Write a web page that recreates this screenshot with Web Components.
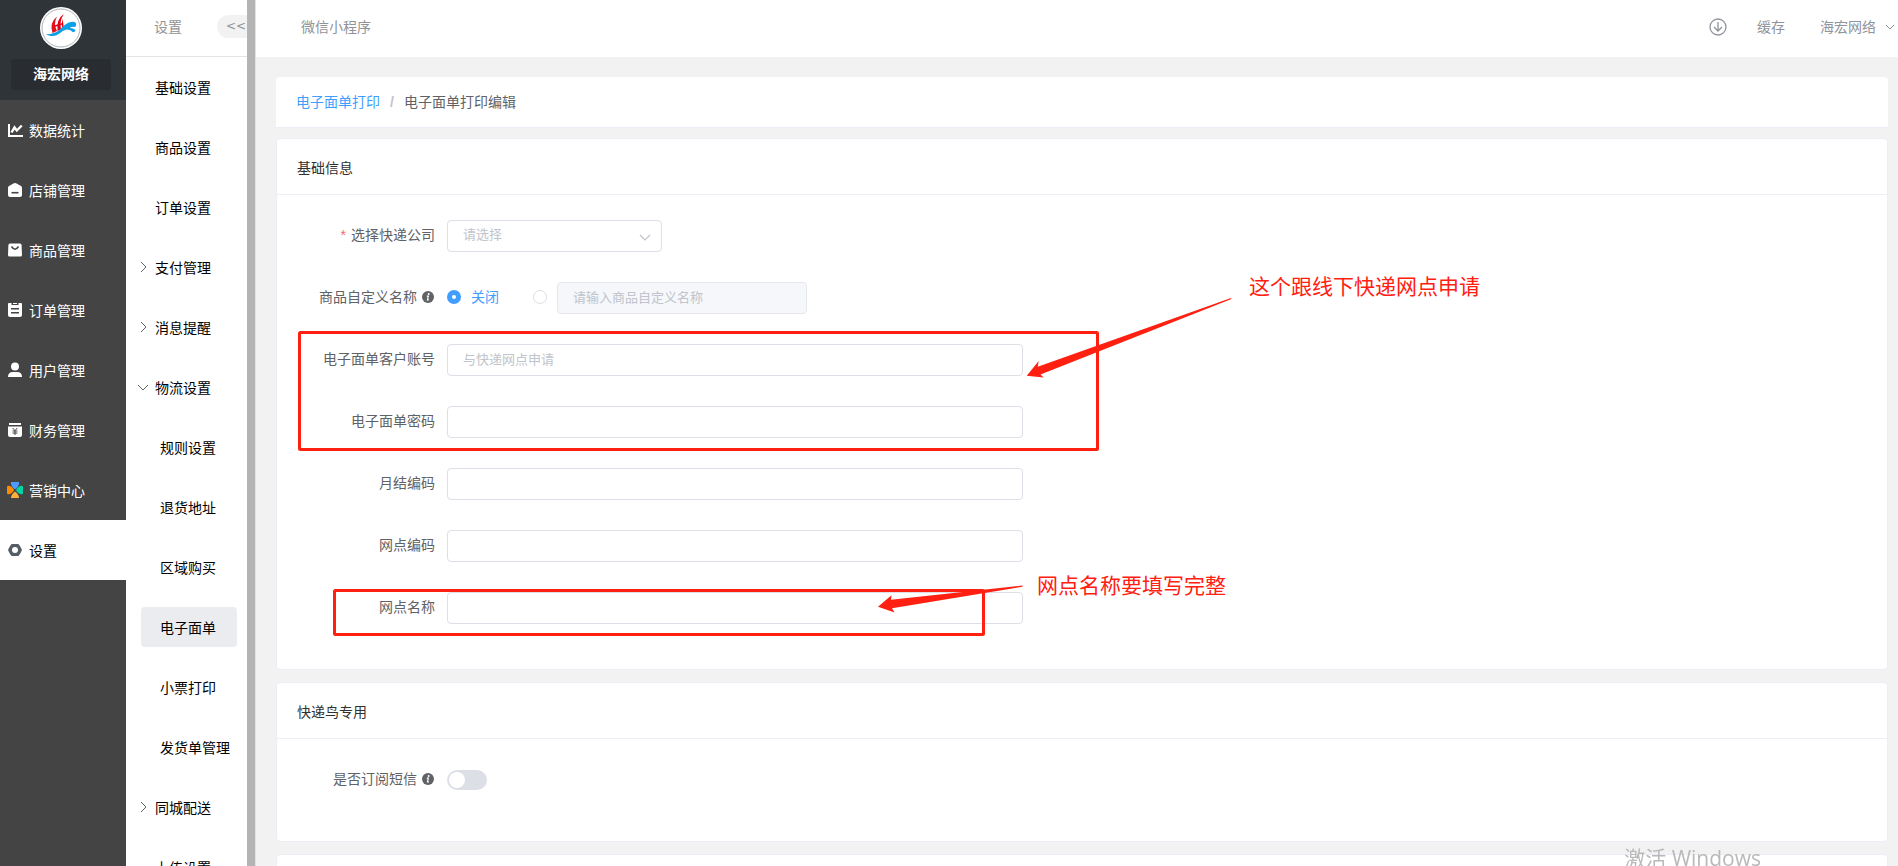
<!DOCTYPE html>
<html lang="zh-CN">
<head>
<meta charset="utf-8">
<title>电子面单打印编辑</title>
<style>
html, body { margin: 0; height: 100%; }
body {
  font-family: "Liberation Sans", "Noto Sans CJK SC", sans-serif;
  font-size: 14px; line-height: 20px; color: #606266; background: #f2f2f2; overflow: hidden;
}
</style>
</head>
<body>
<admin-app>
  <main-nav slot="nav" name="海宏网络">
    <main-item icon="chart">数据统计</main-item>
    <main-item icon="shop">店铺管理</main-item>
    <main-item icon="bag">商品管理</main-item>
    <main-item icon="order">订单管理</main-item>
    <main-item icon="user">用户管理</main-item>
    <main-item icon="money">财务管理</main-item>
    <main-item icon="market">营销中心</main-item>
    <main-item icon="nut" active>设置</main-item>
  </main-nav>
  <sub-nav slot="subnav" heading="设置">
    <sub-item>基础设置</sub-item>
    <sub-item>商品设置</sub-item>
    <sub-item>订单设置</sub-item>
    <sub-item arrow="right">支付管理</sub-item>
    <sub-item arrow="right">消息提醒</sub-item>
    <sub-item arrow="down">物流设置</sub-item>
    <sub-item child>规则设置</sub-item>
    <sub-item child>退货地址</sub-item>
    <sub-item child>区域购买</sub-item>
    <sub-item child active>电子面单</sub-item>
    <sub-item child>小票打印</sub-item>
    <sub-item child>发货单管理</sub-item>
    <sub-item arrow="right">同城配送</sub-item>
    <sub-item>上传设置</sub-item>
  </sub-nav>
  <top-bar slot="top">微信小程序</top-bar>
  <bread-crumb></bread-crumb>
  <info-card heading="基础信息">
    <select-field label="选择快递公司" placeholder="请选择" required></select-field>
    <custom-name-field label="商品自定义名称"></custom-name-field>
    <text-field label="电子面单客户账号" placeholder="与快递网点申请"></text-field>
    <text-field label="电子面单密码"></text-field>
    <text-field label="月结编码"></text-field>
    <text-field label="网点编码"></text-field>
    <text-field label="网点名称"></text-field>
    <note-layer slot="notes"></note-layer>
  </info-card>
  <info-card heading="快递鸟专用">
    <switch-field label="是否订阅短信"></switch-field>
  </info-card>
  <info-card></info-card>
  <os-watermark slot="over">激活 Windows</os-watermark>
</admin-app>

<script>
const define = (name, render) => customElements.define(name, class extends HTMLElement {
  constructor() { super(); this.attachShadow({ mode: 'open' }); }
  connectedCallback() {
    if (this.shadowRoot.firstChild) return;
    this.shadowRoot.innerHTML = render(k => this.getAttribute(k) || '', this);
  }
});

const icons = {
  chart: '<path d="M1 1v12h14" transform="translate(1 1)" fill="none" stroke="#fff" stroke-width="2"/><path d="M4.500 10.500 7.500 5.500l2.300 3L14.800 3.500" fill="none" stroke="#fff" stroke-width="2.400"/>',
  shop: '<path d="M8 1Q9 1 10 1.700L14 4Q15 4.700 15 6v7q0 2-2 2H3q-2 0-2-2V6q0-1.300 1-2L6 1.700Q7 1 8 1z" fill="#fff"/><path d="M4.500 10.700h7" stroke="#444" stroke-width="1.600"/>',
  bag: '<path d="M3 1.500h10q1.500 0 1.600 1.500L15 13q0 1.500-1.500 1.500h-11Q1 14.500 1 13L1.400 3Q1.500 1.500 3 1.500z" fill="#fff"/><path d="M4.500 4.500Q8 10 11.500 4.500" fill="none" stroke="#444" stroke-width="1.500"/>',
  order: '<path d="M2 1h12q1 0 1 1v11q0 2-2 2H3q-2 0-2-2V2q0-1 1-1z" fill="#fff"/><path d="M4.500 0h7v3h-7z" fill="#444"/><path d="M6 1h4v1H6z" fill="#fff"/><path d="M4 6.700h8M4 10.700h8" stroke="#444" stroke-width="1.400"/>',
  user: '<circle cx="8" cy="4.500" r="4" fill="#fff"/><path d="M1 15q0-5 5-5h4q5 0 5 5z" fill="#fff"/>',
  money: '<path d="M2 1h12v2H2zM1 4.500h14V13q0 2-2 2H3q-2 0-2-2z" fill="#fff"/><path d="M5.700 6 8 8.700 10.300 6M8 8.700V13M5.500 9h5M5.500 11h5" fill="none" stroke="#444" stroke-width="1"/>',
  market: '<path d="M4 0h8q0 1 0 2Q11 6 8 7.500 5 6 4 2z" fill="#4a9dff"/><path d="M4 16q0-3.500 4-6.500 4 3 4 6.500z" fill="#fbb03c"/><path d="M0 5q0-1.500 2-1.200Q5.500 4.500 7 8q-1.500 3.500-5 4.200Q0 12.500 0 11z" fill="#ff8a00"/><path d="M16 5q0-1.500-2-1.200Q10.500 4.500 9 8q1.500 3.500 5 4.200 2 .3 2-1.200z" fill="#00d4a4"/>',
  nut: '<path d="M5.200 2h5.600q1 0 1.500.9L14.600 7q.5 1 0 2l-2.300 4.100q-.5.900-1.500.9H5.200q-1 0-1.500-.9L1.400 9q-.5-1 0-2l2.300-4.100Q4.200 2 5.200 2z" fill="#545c64"/><circle cx="8" cy="8" r="3" fill="#fff"/>'
};

define('admin-app', () => `<style>
  :host { display: grid; grid-template-columns: 126px 130px minmax(0, 1fr); height: 100vh; overflow: hidden; }
  .page { display: flex; flex-direction: column; min-height: 0; }
  main { flex: 1; min-height: 0; overflow-y: auto; scrollbar-width: none; padding: 20px 10px 20px 20px; }
  ::slotted(info-card) { margin-bottom: 12px; }
</style>
<slot name="nav"></slot><slot name="subnav"></slot>
<div class="page"><slot name="top"></slot><main><slot></slot></main></div>
<slot name="over"></slot>`);

define('brand-logo', () => `<style>:host { display: block; width: 42px; height: 42px; } svg { display: block; }</style>
<svg width="42" height="42" viewBox="0 0 42 42" aria-hidden="true">
  <circle cx="21" cy="21" r="21" fill="#fff"/><circle cx="21" cy="21" r="19" fill="none" stroke="#aeb2b5" stroke-width="1"/>
  <path d="M17 9.500Q9 16 12.500 26l4.500-2Q13 17 17 9.500z" fill="#e0121c"/>
  <path d="M24 7Q16 12 17.500 24l3.500-1.800Q19 14 24 7z" fill="#e60012"/>
  <path d="M22.500 11.500 24 22l-1.500.6Q21 17 22.500 11.500z" fill="#e60012"/>
  <path d="M14 18.500l8.500-2.500v1.600L14 20.300z" fill="#e60012"/>
  <path d="M6 27.300Q14 27.500 20 22.500 25 17 29 15.500 33 14 35.500 15.500 37 18 35 20q-3-1-5.500 1 5 .4 6 2.500-.5 1.600-2.500 1.800-2.500-3-6.500-2.700-4 1-7 3.900Q15 30 10 28.800 8 28.500 6 27.300z" fill="#0a9fe6"/>
</svg>`);

define('main-nav', a => `<style>
  :host { display: block; background: #444; overflow: hidden; }
  header { box-sizing: border-box; height: 100px; padding-top: 7px; background: #2f3439; display: flex; flex-direction: column; align-items: center; gap: 10px; padding-right: 4px; }
  strong { width: 100px; line-height: 31px; border-radius: 3px; background: #292c31; color: #fff; text-align: center; }
</style><header><brand-logo></brand-logo><strong>${a('name')}</strong></header><nav><slot></slot></nav>`);

define('main-item', a => `<style>
  :host { display: block; }
  a { display: flex; align-items: center; height: 60px; padding-left: 7px; gap: 6px; color: #fff; text-decoration: none; }
  :host([active]) a { background: #fff; color: #000; }
  svg { flex: none; }
  span { padding-top: 2px; }
</style><a href="#"><svg width="16" height="16" viewBox="0 0 16 16" aria-hidden="true">${icons[a('icon')]}</svg><span><slot></slot></span></a>`);

define('sub-nav', a => `<style>
  :host { display: block; box-sizing: border-box; background: #fff; border-right: 1px solid #e2e2e2; overflow: hidden; }
  .inner { box-sizing: border-box; height: 100%; border-right: 8px solid #b4b4b4; overflow: hidden; }
  header { display: flex; align-items: center; justify-content: space-between; box-sizing: border-box; height: 57px; padding: 0 0 3px 28px; border-bottom: 1px solid #e4e4e4; color: #909399; }
  button { width: 30px; height: 23px; margin: 0; padding: 0 0 0 9px; border: 0; border-radius: 12px 0 0 12px; background: #f2f2f2; color: #909399; font: 12px/23px "DejaVu Sans", sans-serif; text-align: left; overflow: hidden; }
</style><div class="inner"><header><span>${a('heading')}</span><button type="button">&lt;&lt;</button></header><nav><slot></slot></nav></div>`);

define('sub-item', a => {
  const d = { right: 'M3 0l5 5-5 5', down: 'M0 3l5 5 5-5' }[a('arrow')] || '';
  return `<style>
  :host { display: block; padding: 10px 10px 10px 12px; }
  a { display: flex; align-items: center; gap: 7px; height: 40px; color: #000; text-decoration: none; border-radius: 4px; white-space: nowrap; }
  svg { flex: none; }
  span { padding-top: 2px; }
  :host([child]) { padding-left: 15px; }
  :host([child]) a { padding-left: 19px; }
  :host([child]) svg { display: none; }
  :host([active]) a { background: #ebecf0; }
</style><a href="#"><svg width="10" height="10" viewBox="0 0 10 10" fill="none" stroke="#606266" aria-hidden="true"><path d="${d}"/></svg><span><slot></slot></span></a>`;
});

define('top-bar', () => `<style>
  :host { display: flex; align-items: center; box-sizing: border-box; height: 57px; padding: 0 3px 3px 45px; background: #fff; color: #909399; flex: none; }
  nav { display: flex; align-items: center; margin-left: auto; }
  a { color: inherit; text-decoration: none; margin-left: 30px; }
  button { display: flex; align-items: center; gap: 9px; margin: 0 0 0 35px; padding: 0; border: 0; background: none; color: inherit; font: inherit; }
  svg { display: block; }
</style><span><slot></slot></span><nav>
<svg width="18" height="18" viewBox="0 0 18 18" fill="none" stroke="#909399" stroke-width="1.300" role="img" aria-label="下载"><circle cx="9" cy="9" r="8"/><path d="M9 4v9M5 9l4 4 4-4"/></svg>
<a href="#">缓存</a>
<button type="button">海宏网络<svg width="10" height="10" viewBox="0 0 10 10" fill="none" stroke="#909399" aria-hidden="true"><path d="M1 3l4 4 4-4"/></svg></button></nav>`);

define('bread-crumb', () => `<style>
  :host { display: flex; align-items: center; gap: 10px; height: 50px; padding: 0 20px; margin-bottom: 10px; background: #fff; border-bottom: 1px solid #ebeef5; border-radius: 4px 4px 0 0; }
  a { color: #409eff; text-decoration: none; }
  i { font-weight: bold; font-style: normal; color: #c0c4cc; }
</style><a href="#">电子面单打印</a><i>/</i><span>电子面单打印编辑</span>`);

define('info-card', a => `<style>
  :host { display: block; position: relative; background: #fff; border: 1px solid #ebeef5; border-radius: 4px; }
  h2 { box-sizing: border-box; margin: 0; padding: 2px 20px 0; height: 56px; line-height: 54px; font-size: 14px; font-weight: normal; color: #303133; border-bottom: 1px solid #ebeef5; }
  form { padding: 25px 20px 15px; }
</style><h2>${a('heading')}</h2><form><slot></slot></form><slot name="notes"></slot>`);

const fieldCss = `
  :host { display: flex; margin-bottom: 30px; height: 32px; }
  .label { box-sizing: border-box; width: 150px; padding-right: 12px; display: flex; justify-content: flex-end; align-items: center; gap: 5px; height: 30px; white-space: nowrap; }
  .label svg { margin-right: 1px; }
  .box { box-sizing: border-box; height: 32px; margin: 0; padding: 0 15px 2px; border: 1px solid #dcdfe6; border-radius: 4px; background: #fff; font: inherit; font-size: 13px; color: #606266; outline: 0; }
  .box::placeholder { color: #c0c4cc; opacity: 1; }`;
const info = '<svg width="12" height="12" viewBox="0 0 12 12" aria-hidden="true"><circle cx="6" cy="6" r="6" fill="#606266"/><circle cx="6.700" cy="3" r="1" fill="#fff"/><path d="M4.800 5.200h1.500L5.500 9h1.500" fill="none" stroke="#fff" stroke-width="1.200"/></svg>';

define('text-field', a => `<style>${fieldCss}
  input { width: 576px; max-width: calc(100% - 150px); }
</style><label class="label" for="c">${a('label')}</label><input class="box" id="c" type="text" placeholder="${a('placeholder')}">`);

define('select-field', (a, el) => `<style>${fieldCss}
  .label i { font-style: normal; color: #f56c6c; }
  .wrap { position: relative; width: 215px; }
  select.box { width: 100%; appearance: none; color: #c0c4cc; }
  svg { position: absolute; right: 11px; top: 12px; pointer-events: none; }
</style><label class="label" for="c">${el.hasAttribute('required') ? '<i>*</i>' : ''}${a('label')}</label>
<div class="wrap"><select class="box" id="c"><option>${a('placeholder')}</option></select>
<svg width="12" height="12" viewBox="0 0 12 12" fill="none" stroke="#c0c4cc" stroke-width="1.200" aria-hidden="true"><path d="M1 3l5 5 5-5"/></svg></div>`);

define('custom-name-field', a => `<style>${fieldCss}
  .group { display: flex; align-items: center; }
  input[type=radio] { appearance: none; box-sizing: border-box; width: 14px; height: 14px; margin: 0; border: 1px solid #dcdfe6; border-radius: 50%; background: #fff; }
  input[type=radio]:checked { border: 5px solid #409eff; }
  .on { display: flex; align-items: center; gap: 10px; color: #409eff; margin-right: 34px; height: 30px; align-self: flex-start; }
  .off { display: flex; align-self: flex-start; align-items: center; height: 30px; margin-right: 10px; }
  .box { width: 250px; background: #f5f7fa; border-color: #e4e7ed; }
</style><span class="label" id="l">${a('label')}${info}</span>
<div class="group" role="radiogroup" aria-labelledby="l">
<label class="on"><input type="radio" name="n" checked>关闭</label>
<span class="off"><input type="radio" name="n" aria-label="自定义名称"></span>
<input class="box" type="text" placeholder="请输入商品自定义名称" aria-labelledby="l" disabled></div>`);

define('switch-field', a => `<style>${fieldCss}
  input { appearance: none; box-sizing: border-box; width: 40px; height: 20px; margin: 6px 0; padding: 2px; border-radius: 10px; background: #dcdfe6; display: flex; }
  input::before { content: ""; width: 16px; height: 16px; border-radius: 50%; background: #fff; }
  input:checked { background: #409eff; justify-content: flex-end; }
</style><label class="label" for="c">${a('label')}${info}</label><input id="c" type="checkbox" role="switch">`);

/* Review marks drawn over the form; origin is the card's inner corner. */
define('note-layer', () => `<style>
  :host { position: absolute; inset: 0; pointer-events: none; color: #ff2011; font-size: 21px; line-height: 30px; }
  svg, span { position: absolute; }
  svg { left: 0; top: 0; }
  span { white-space: nowrap; }
  .apply { left: 972px; top: 133px; }
  .full { left: 760px; top: 432px; }
</style>
<svg width="1000" height="530" viewBox="277 139 1000 530" aria-hidden="true">
  <g fill="none" stroke="#ff2011" stroke-width="3"><rect x="299.500" y="332.500" width="798" height="117" rx="1"/><rect x="334.500" y="590.500" width="649" height="44" rx="1"/></g>
  <g fill="#ff2011"><path d="M1026.700 375.700l12-14.700-1 5.700L1231 298l.5 1L1040.500 374.500l3.200 3z"/>
  <path d="M878 606.700l13.500-11.500-.5 4.500L1022.500 585.500v1.200L892 608.300l2.500 4.200z"/></g>
</svg>
<span class="apply">这个跟线下快递网点申请</span><span class="full">网点名称要填写完整</span>`);

define('os-watermark', () => `<style>
  :host { position: fixed; right: 137px; bottom: -6px; font: 21px/28px "Open Sans", "Noto Sans CJK SC", sans-serif; color: #b9b9b9; pointer-events: none; }
</style><slot></slot>`);
</script>
</body>
</html>
